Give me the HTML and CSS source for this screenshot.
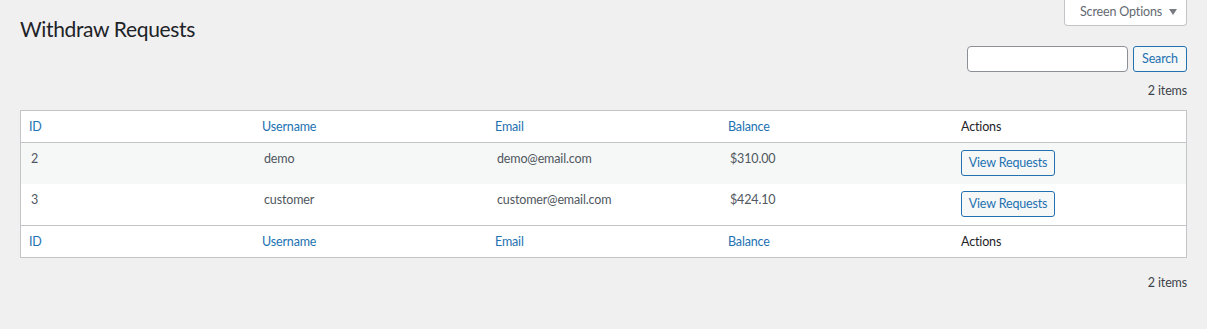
FILE: index.html
```html
<!DOCTYPE html>
<html lang="en">
<head>
<meta charset="utf-8">
<title>Withdraw Requests</title>
<link rel="stylesheet" href="styles.css">
</head>
<body>
<div class="wrap">
  <div class="topbar">
    <h1 class="page-title">Withdraw Requests</h1>
    <button class="screen-options" type="button">Screen Options <svg class="caret" width="8" height="6" viewBox="0 0 8 6"><path d="M0 0h8L4 6z" fill="#787c82"/></svg></button>
  </div>
  <form class="search-box">
    <input class="search-input" type="search" aria-label="Search">
    <button class="btn search" type="button">Search</button>
  </form>
  <div class="tablenav">2 items</div>
  <table class="list-table">
    <thead>
      <tr>
        <th class="link">ID</th>
        <th class="link">Username</th>
        <th class="link">Email</th>
        <th class="link">Balance</th>
        <th>Actions</th>
      </tr>
    </thead>
    <tbody>
      <tr class="alt">
        <td>2</td>
        <td>demo</td>
        <td>demo@email.com</td>
        <td>$310.00</td>
        <td class="act"><button class="btn view" type="button">View Requests</button></td>
      </tr>
      <tr>
        <td>3</td>
        <td>customer</td>
        <td>customer@email.com</td>
        <td>$424.10</td>
        <td class="act"><button class="btn view" type="button">View Requests</button></td>
      </tr>
    </tbody>
    <tfoot>
      <tr>
        <th class="link">ID</th>
        <th class="link">Username</th>
        <th class="link">Email</th>
        <th class="link">Balance</th>
        <th>Actions</th>
      </tr>
    </tfoot>
  </table>
  <div class="tablenav bottom">2 items</div>
</div>
</body>
</html>
```
FILE: styles.css
```css
* { box-sizing: border-box; }
html, body { margin: 0; padding: 0; }
body {
  background: #f0f0f1;
  font-family: Lato, "Noto Sans", "Liberation Sans", sans-serif;
  font-size: 12.5px;
  letter-spacing: -0.15px;
  color: #3c434a;
}
.wrap { margin: 0 20px; }
.topbar {
  display: flex;
  justify-content: space-between;
  align-items: flex-start;
}
.page-title {
  margin: 14px 0 0;
  font-size: 21px;
  letter-spacing: -0.35px;
  line-height: 30px;
  font-weight: 400;
  color: #1d2327;
}
.screen-options {
  width: 123px;
  height: 26px;
  margin: 0;
  padding: 0 0 2px 6px;
  background: #fff;
  border: 1px solid #c3c4c7;
  border-top: none;
  border-radius: 0 0 4px 4px;
  font-family: inherit;
  font-size: 12.5px;
  letter-spacing: -0.15px;
  color: #646970;
  display: flex;
  align-items: center;
  justify-content: center;
  gap: 7px;
}
.caret { display: block; margin-top: 1px; }
.search-box {
  display: flex;
  justify-content: flex-end;
  gap: 5px;
  margin: 2px 0 0;
}
.search-input {
  width: 161px;
  height: 26px;
  border: 1px solid #8c8f94;
  border-radius: 4px;
  background: #fff;
  margin: 0;
  padding: 0 8px;
}
.btn {
  height: 26px;
  margin: 0;
  padding: 0 8px;
  border: 1px solid #2271b1;
  border-radius: 3px;
  background: #f6f7f7;
  color: #2271b1;
  font-family: inherit;
  font-size: 12.5px;
  letter-spacing: -0.15px;
  line-height: 24px;
}
.btn.search { width: 54px; padding: 0; text-align: center; }
.tablenav {
  text-align: right;
  padding-top: 10px;
  line-height: 18px;
  height: 38px;
  color: #3c434a;
}
.tablenav.bottom { padding-top: 16px; }
.list-table {
  width: 100%;
  table-layout: fixed;
  border-collapse: separate;
  border-spacing: 0;
  border: 1px solid #c3c4c7;
  background: #fff;
}
.list-table th {
  text-align: left;
  font-weight: 400;
  height: 32px;
  padding: 1px 8px 0;
  line-height: 30px;
  color: #1d2327;
}
.list-table th.link { color: #2271b1; }
.list-table thead th { border-bottom: 1px solid #c3c4c7; }
.list-table tfoot th { border-top: 1px solid #c3c4c7; }
.list-table td {
  vertical-align: top;
  padding: 8px 10px 6px;
  height: 41px;
  line-height: 16px;
  color: #50575e;
}
.list-table td.act { padding: 7px 8px 7px; }
.list-table tr.alt td { background: #f6f7f7; }
.btn.view {
  width: 94px;
  height: 26px;
  padding: 0;
  text-align: center;
}
```
